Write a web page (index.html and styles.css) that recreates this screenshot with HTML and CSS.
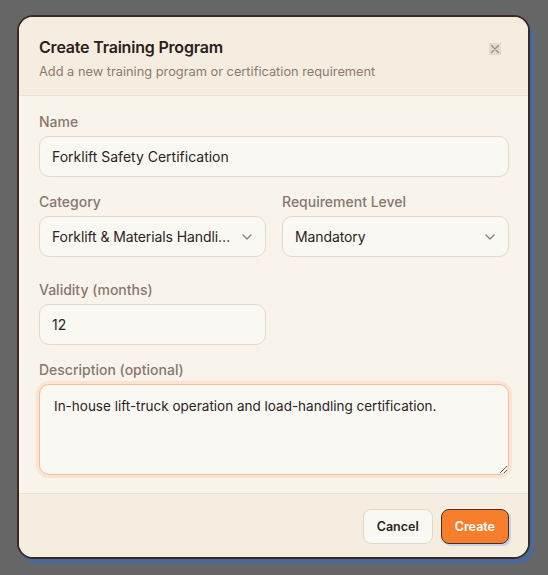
FILE: index.html
```html
<!DOCTYPE html>
<html lang="en">
<head>
<meta charset="utf-8">
<title>Create Training Program</title>
<link rel="stylesheet" href="styles.css">
</head>
<body>
<div class="dialog">
  <div class="header">
    <h2 class="title">Create Training Program</h2>
    <p class="subtitle">Add a new training program or certification requirement</p>
    <span class="close" aria-label="Close">
      <svg viewBox="0 0 12 12" width="12" height="12"><path d="M2.5 2.5 L9.5 9.5 M9.5 2.5 L2.5 9.5" stroke="#9c8d83" stroke-width="1.2" fill="none" stroke-linecap="round"/></svg>
    </span>
  </div>
  <div class="body">
    <div class="field">
      <label class="label">Name</label>
      <div class="input">Forklift Safety Certification</div>
    </div>
    <div class="row">
      <div class="field">
        <label class="label">Category</label>
        <div class="input select"><span class="val">Forklift &amp; Materials Handli…</span>
          <svg class="chev" viewBox="0 0 16 16" width="16" height="16"><path d="M4 6 L8 10 L12 6" stroke="#8d7d73" stroke-width="1.3" fill="none" stroke-linecap="round" stroke-linejoin="round"/></svg>
        </div>
      </div>
      <div class="field">
        <label class="label">Requirement Level</label>
        <div class="input select"><span class="val">Mandatory</span>
          <svg class="chev" viewBox="0 0 16 16" width="16" height="16"><path d="M4 6 L8 10 L12 6" stroke="#8d7d73" stroke-width="1.3" fill="none" stroke-linecap="round" stroke-linejoin="round"/></svg>
        </div>
      </div>
    </div>
    <div class="row single">
      <div class="field">
        <label class="label">Validity (months)</label>
        <div class="input">12</div>
      </div>
    </div>
    <div class="field last">
      <label class="label">Description (optional)</label>
      <textarea class="textarea">In-house lift-truck operation and load-handling certification.</textarea>
    </div>
  </div>
  <div class="footer">
    <button class="btn cancel">Cancel</button>
    <button class="btn create">Create</button>
  </div>
</div>
</body>
</html>
```
FILE: styles.css
```css
* { box-sizing: border-box; }
html, body { margin: 0; }
body {
  background: #666666;
  height: 575px;
  padding: 15px 0 0 17px;
  font-family: "Inter", "Liberation Sans", sans-serif;
  color: #2d231f;
}
.dialog {
  position: relative;
  width: 513px;
  height: 544px;
  border: 2px solid #3b2a24;
  border-radius: 16px;
  box-shadow: 4px 5px 0 #4c6897;
  overflow: hidden;
  background: #f8f4eb;
  display: flex;
  flex-direction: column;
}
.header {
  background: #f5eee0;
  border-bottom: 1px solid #ebe2d3;
  padding: 18px 20px 13px;
}
.title {
  margin: 0;
  font-size: 16px;
  line-height: 24px;
  font-weight: 600;
  letter-spacing: -0.2px;
  color: #2b201c;
}
.subtitle {
  margin: 3px 0 0;
  font-size: 12.8px;
  line-height: 20px;
  color: #8b7a70;
}
.close {
  position: absolute;
  top: 26px;
  right: 27px;
  width: 12px;
  height: 12px;
  background: #e3dbcf;
  display: flex;
}
.body {
  flex: 1;
  padding: 16px 19px 18px 20px;
}
.field { margin-bottom: 15px; min-width: 0; }
.field.last { margin-bottom: 0; }
.row {
  display: grid;
  grid-template-columns: minmax(0, 1fr) minmax(0, 1fr);
  gap: 16px;
  margin-bottom: 8px;
}
.row .field { margin-bottom: 15px; }
.row.single { margin-bottom: 0; }
.row.single .field { margin-bottom: 15px; }
.label {
  display: block;
  font-size: 14px;
  line-height: 20px;
  font-weight: 500;
  color: #8a766b;
  margin-bottom: 4px;
}
.input {
  height: 41px;
  background: #faf8f3;
  border: 1px solid #e2d8c8;
  border-radius: 10px;
  padding: 0 10px 0 12px;
  font-size: 14px;
  display: flex;
  align-items: center;
  color: #2d231f;
}
.select { justify-content: space-between; }
.val { white-space: nowrap; letter-spacing: -0.1px; }
.chev { flex: none; margin-left: 2px; }
.textarea {
  display: block;
  width: 100%;
  height: 91px;
  background: #faf8f3;
  border: 1px solid #f6bf98;
  box-shadow: 0 0 0 3px #fbe4d1;
  border-radius: 10px;
  padding: 11px 14px;
  font-family: inherit;
  font-size: 13.5px;
  line-height: 20px;
  color: #2d231f;
  outline: none;
  resize: vertical;
}
.footer {
  background: #f5eee0;
  border-top: 1px solid #ebe2d3;
  padding: 15px 19px 13px 20px;
  display: flex;
  justify-content: flex-end;
  gap: 8px;
}
.btn {
  height: 35px;
  border-radius: 8px;
  font-family: inherit;
  font-size: 12.5px;
  font-weight: 600;
  padding: 0 13px;
  cursor: pointer;
}
.cancel {
  background: #faf8f3;
  border: 1px solid #e2d8c8;
  color: #2d231f;
}
.create {
  background: #f77e2d;
  border: 1px solid #4a3026;
  color: #ffffff;
  box-shadow: 2px 2px 0 #c7d3e6;
}
```
